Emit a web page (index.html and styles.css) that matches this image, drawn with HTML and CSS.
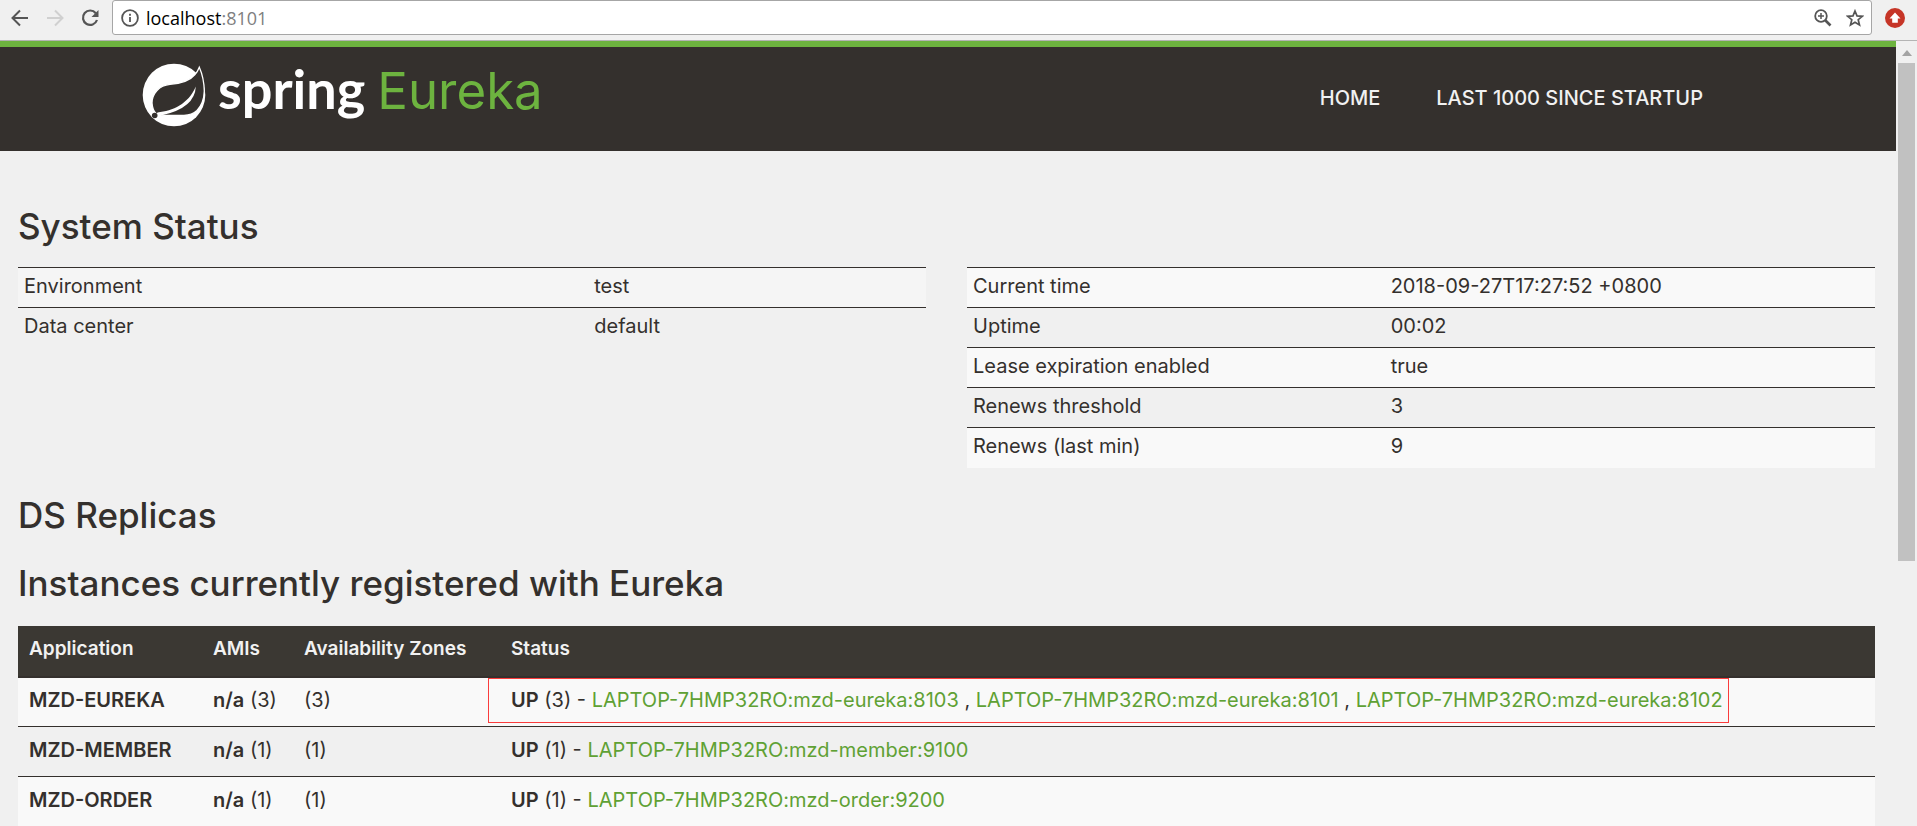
FILE: index.html
```html
<!DOCTYPE html>
<html lang="en">
<head>
<meta charset="utf-8">
<title>Eureka</title>
<link rel="stylesheet" href="styles.css">
</head>
<body>
<div class="toolbar">
  <button class="tool" type="button" aria-label="Back"><svg width="18" height="18" viewBox="0 0 18 18" fill="none" stroke="#555" stroke-width="2"><path d="M17 9H2M9 1.500L1.500 9L9 16.500"/></svg></button>
  <button class="tool" type="button" aria-label="Forward" disabled><svg width="18" height="18" viewBox="0 0 18 18" fill="none" stroke="#d0d0d0" stroke-width="2"><path d="M1 9h15M9 1.500L16.500 9L9 16.500"/></svg></button>
  <button class="tool" type="button" aria-label="Reload"><svg width="18" height="18" viewBox="0 0 18 18" fill="none"><path d="M14.800 4.200A7.200 7.200 0 1 0 16 11" stroke="#555" stroke-width="2.200"/><path d="M17.500 1v7h-7z" fill="#555"/></svg></button>
  <div class="address">
    <svg width="18" height="18" viewBox="0 0 18 18" fill="none" stroke="#555" stroke-width="1.800"><circle cx="9" cy="9" r="7.900"/><path d="M9 8v5M9 4.800v1.900"/></svg>
    <a class="url" href="#">localhost<span class="port">:8101</span></a>
    <button class="tool" type="button" aria-label="Zoom"><svg width="18" height="18" viewBox="0 0 18 18" fill="none" stroke="#555"><circle cx="7" cy="7" r="5.800" stroke-width="1.800"/><path d="M4 7h6M7 4v6" stroke-width="1.500"/><path d="M11 11l5.500 5.500" stroke-width="2.600"/></svg></button>
    <button class="tool" type="button" aria-label="Bookmark"><svg width="18" height="18" viewBox="0 0 18 18" fill="none" stroke="#555" stroke-width="1.700"><path d="M9 2l2 4.900 5.200.400-4 3.400 1.300 5.200L9 13.200l-4.500 2.700 1.300-5.200-4-3.400L7 6.900z"/></svg></button>
  </div>
  <button class="tool ext" type="button" aria-label="Extension"><svg width="20" height="20" viewBox="0 0 20 20"><circle cx="10" cy="10" r="10" fill="#c63527"/><path d="M10 4.500L4.500 10.500h2.700v4.300h5.600v-4.300h2.700z" fill="#fff"/></svg></button>
</div>
<div class="window">
  <div class="page">
    <header class="header">
      <a class="brand" href="#">
        <svg width="64" height="64" viewBox="0 0 64 64"><circle cx="32" cy="32" r="31.300" fill="#fff"/><path d="M57.300 4.300Q55.500 9 53 11.500Q46 20 28 21.300Q20 22 15 27.500Q10 33 10 40Q10.500 47 14 50.500Q17 52.500 24 52.300L42 52.500Q50 52 55 47.500Q62 40 62.300 28Q62 15 57.300 4.300z" fill="#34302d" stroke="#fff" stroke-width="1.300"/><path d="M53.800 23.500Q53 45 20 52.200Q13 53 15.500 49.500C31 47.500 46 41.500 53.800 23.500z" fill="#fff"/><circle cx="12.700" cy="52.500" r="2.800" fill="#34302d"/></svg>
        <span class="name">spring</span><span class="product">Eureka</span>
      </a>
      <nav class="nav"><a href="#">HOME</a><a href="#">LAST 1000 SINCE STARTUP</a></nav>
    </header>
    <main class="content">
      <h1>System Status</h1>
      <div class="status">
        <table class="facts general">
          <tr><td>Environment</td><td>test</td></tr>
          <tr><td>Data center</td><td>default</td></tr>
        </table>
        <table class="facts runtime">
          <tr><td>Current time</td><td>2018-09-27T17:27:52 +0800</td></tr>
          <tr><td>Uptime</td><td>00:02</td></tr>
          <tr><td>Lease expiration enabled</td><td>true</td></tr>
          <tr><td>Renews threshold</td><td>3</td></tr>
          <tr><td>Renews (last min)</td><td>9</td></tr>
        </table>
      </div>
      <h1>DS Replicas</h1>
      <h1>Instances currently registered with Eureka</h1>
      <table class="instances">
        <colgroup><col class="c-app"><col class="c-ami"><col class="c-zone"><col></colgroup>
        <thead><tr><th>Application</th><th>AMIs</th><th>Availability Zones</th><th>Status</th></tr></thead>
        <tbody>
          <tr><td><b>MZD-EUREKA</b></td><td><b>n/a</b> (3)</td><td>(3)</td><td><span class="marked"><b>UP</b> (3) - <a href="#">LAPTOP-7HMP32RO:mzd-eureka:8103</a> , <a href="#">LAPTOP-7HMP32RO:mzd-eureka:8101</a> , <a href="#">LAPTOP-7HMP32RO:mzd-eureka:8102</a></span></td></tr>
          <tr><td><b>MZD-MEMBER</b></td><td><b>n/a</b> (1)</td><td>(1)</td><td><b>UP</b> (1) - <a href="#">LAPTOP-7HMP32RO:mzd-member:9100</a></td></tr>
          <tr><td><b>MZD-ORDER</b></td><td><b>n/a</b> (1)</td><td>(1)</td><td><b>UP</b> (1) - <a href="#">LAPTOP-7HMP32RO:mzd-order:9200</a></td></tr>
        </tbody>
      </table>
    </main>
  </div>
  <div class="scrollbar"><svg width="10" height="6" viewBox="0 0 10 6"><path d="M5 0l5 6H0z" fill="#a3a3a3"/></svg><div class="thumb"></div></div>
</div>
</body>
</html>
```
FILE: styles.css
```css
* { box-sizing: border-box; }
body {
  margin: 0;
  height: 100vh;
  display: flex;
  flex-direction: column;
  overflow: hidden;
  background: #f0f0f0;
  color: #34302d;
  font: 20px/24px Inter, "Open Sans", sans-serif;
}
a { color: inherit; text-decoration: none; }
svg { display: block; flex: none; }

.toolbar {
  flex: none;
  display: flex;
  align-items: center;
  gap: 17px;
  height: 41px;
  padding: 0 12px 5px 11px;
  border-bottom: 1px solid #b4b4b4;
}
.tool { padding: 0; border: 0; background: none; }
.address {
  flex: 1;
  display: flex;
  align-items: center;
  gap: 14px;
  height: 35px;
  margin: 0 -4px;
  padding: 0 7px 0 8px;
  border: 1px solid #a6a6a6;
  border-radius: 3px;
  background: #fff;
}
.url { flex: 1; margin-left: -7px; color: #000; font-family: "Open Sans", sans-serif; font-size: 18px; }
.port { color: #808080; }

.window { flex: 1; display: flex; min-height: 0; }
.page { flex: 1; min-width: 0; overflow: hidden; }
.scrollbar {
  flex: none;
  display: flex;
  flex-direction: column;
  align-items: center;
  gap: 7px;
  width: 21px;
  padding-top: 9px;
}
.thumb { width: 17px; height: 64.200%; background: #c1c1c1; }

.header {
  display: flex;
  align-items: flex-start;
  justify-content: space-between;
  height: 110px;
  padding: 16px 193px 0 142px;
  border-top: 6px solid #6db33f;
  background: #34302d;
}
.brand { display: flex; align-items: baseline; }
.brand svg { align-self: flex-start; }
.name, .product { line-height: 52px; }
.name { margin-left: 12px; color: #fff; font-family: Lato, sans-serif; font-size: 54px; font-weight: 700; }
.product { margin-left: 12px; color: #6db33f; font-size: 51px; }
.nav { display: flex; gap: 56px; padding-top: 23px; color: #f1f1f1; font-weight: 500; }

.content { padding: 56px 21px 0 18px; }
h1 { margin: 0 0 22px; font-size: 35px; font-weight: 500; line-height: 38px; }
h1 + h1 { margin: 30px 0 24px; }
table { width: 100%; border-collapse: collapse; table-layout: fixed; }
td, th { padding: 0; text-align: left; }
.status { display: grid; grid-template-columns: 1fr 1fr; align-items: start; gap: 41px; margin-bottom: 28px; }
.facts td { height: 40px; padding: 6px 6px 9px; border-top: 1px solid #34302d; }
.general td:first-child { width: 62.800%; }
.runtime td:first-child { width: 46%; }
.general tr:nth-child(odd) { background: #f5f5f5; }
.runtime tr:nth-child(odd), .instances tbody tr:nth-child(odd) { background: #f9f9f9; }

.c-app { width: 184px; }
.c-ami { width: 91px; }
.c-zone { width: 207px; }
.instances td, .instances th { height: 50px; padding: 10px 11px 14px; white-space: nowrap; }
.instances th { height: 51px; background: #3b3833; color: #f1f1f1; border-bottom: 2px solid #34302d; font-size: 19px; }
.instances tbody tr + tr td { border-top: 1px solid #34302d; }
.instances b, .instances th { font-weight: 600; }
.instances a { color: #5fa134; }
.marked { position: relative; }
.marked::after {
  content: "";
  position: absolute;
  inset: -10px -6px -11px -23px;
  border: 1px solid #fa3c3c;
  pointer-events: none;
}
```
